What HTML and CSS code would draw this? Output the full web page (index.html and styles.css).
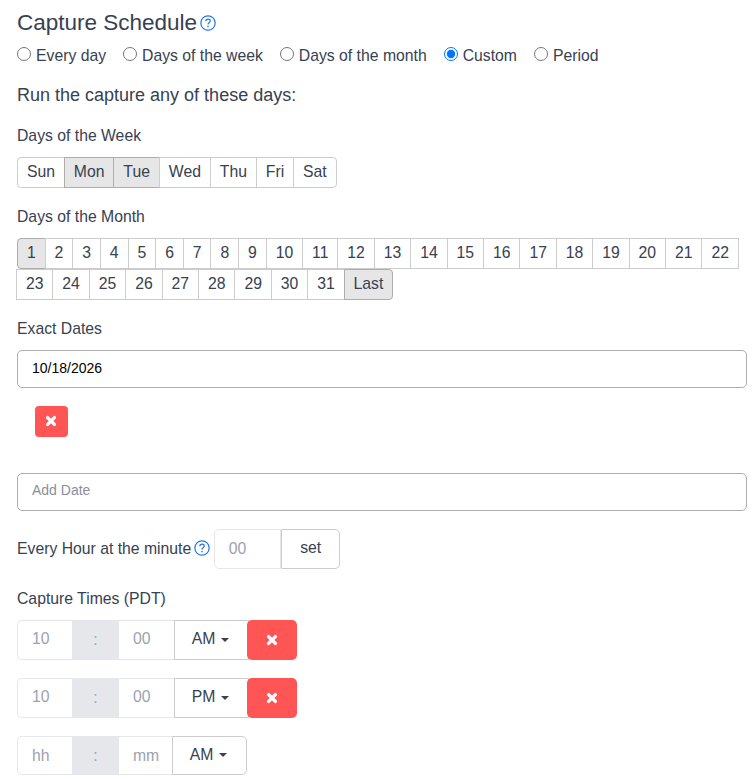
FILE: index.html

```html
<!DOCTYPE html>
<html lang="en">
<head>
    <meta charset="UTF-8">
    <title>Capture Schedule</title>
    <link rel="stylesheet" href="styles.css">
</head>
<body>

    <svg class="sprites" width="0" height="0">
        <symbol id="help" viewBox="0 0 17 17">
            <circle cx="8.5" cy="8.5" r="7.6" fill="none" stroke="currentColor" stroke-width="1.3"/>
            <path d="M6.2 6.7c0-1.4 1-2.3 2.4-2.3s2.3.9 2.3 2c0 1.8-2.4 1.8-2.4 3.7" fill="none" stroke="currentColor" stroke-width="1.3"/>
            <circle cx="8.5" cy="12.4" r=".85" fill="currentColor"/>
        </symbol>
        <symbol id="times" viewBox="0 0 12 12">
            <path d="M2.6 2.6l6.8 6.8M9.4 2.6L2.6 9.4" fill="none" stroke="currentColor" stroke-width="3.4" stroke-linecap="round"/>
        </symbol>
    </svg>

    <div class="container">
        <h2 class="title">Capture Schedule<svg class="help help-title"><use href="#help"/></svg></h2>

        <div class="radios">
            <label class="radio"><input type="radio" name="schedule">Every day</label>
            <label class="radio"><input type="radio" name="schedule">Days of the week</label>
            <label class="radio"><input type="radio" name="schedule">Days of the month</label>
            <label class="radio"><input type="radio" name="schedule" checked>Custom</label>
            <label class="radio"><input type="radio" name="schedule">Period</label>
        </div>

        <h3 class="subtitle">Run the capture any of these days:</h3>

        <div class="field-label week-label">Days of the Week</div>
        <div class="btn-group">
            <button class="day">Sun</button>
            <button class="day active">Mon</button>
            <button class="day active">Tue</button>
            <button class="day">Wed</button>
            <button class="day">Thu</button>
            <button class="day">Fri</button>
            <button class="day">Sat</button>
        </div>

        <div class="field-label month-label">Days of the Month</div>
        <div class="btn-group month-group">
            <button class="day active">1</button>
            <button class="day">2</button>
            <button class="day">3</button>
            <button class="day">4</button>
            <button class="day">5</button>
            <button class="day">6</button>
            <button class="day">7</button>
            <button class="day">8</button>
            <button class="day">9</button>
            <button class="day">10</button>
            <button class="day">11</button>
            <button class="day">12</button>
            <button class="day">13</button>
            <button class="day">14</button>
            <button class="day">15</button>
            <button class="day">16</button>
            <button class="day">17</button>
            <button class="day">18</button>
            <button class="day">19</button>
            <button class="day">20</button>
            <button class="day">21</button>
            <button class="day">22</button>
            <button class="day">23</button>
            <button class="day">24</button>
            <button class="day">25</button>
            <button class="day">26</button>
            <button class="day">27</button>
            <button class="day">28</button>
            <button class="day">29</button>
            <button class="day">30</button>
            <button class="day">31</button>
            <button class="day active">Last</button>
        </div>

        <div class="field-label dates-label">Exact Dates</div>
        <input class="date-input" type="text" value="10/18/2026">
        <button class="btn-delete btn-delete-date"><svg class="times"><use href="#times"/></svg></button>
        <input class="date-input add-date" type="text" placeholder="Add Date">

        <div class="minute-row">
            <span class="minute-label">Every Hour at the minute</span>
            <svg class="help help-minute"><use href="#help"/></svg>
            <input class="minute-input" type="text" placeholder="00">
            <button class="btn-set">set</button>
        </div>

        <div class="field-label times-label">Capture Times (PDT)</div>

        <div class="time-row">
            <input class="time-input hour" type="text" placeholder="10">
            <span class="time-sep">:</span>
            <input class="time-input minute" type="text" placeholder="00">
            <button class="btn-ampm">AM<span class="caret"></span></button>
            <button class="btn-delete btn-delete-time"><svg class="times"><use href="#times"/></svg></button>
        </div>
        <div class="time-row">
            <input class="time-input hour" type="text" placeholder="10">
            <span class="time-sep">:</span>
            <input class="time-input minute" type="text" placeholder="00">
            <button class="btn-ampm">PM<span class="caret"></span></button>
            <button class="btn-delete btn-delete-time"><svg class="times"><use href="#times"/></svg></button>
        </div>
        <div class="time-row new-time">
            <input class="time-input hour" type="text" placeholder="hh">
            <span class="time-sep">:</span>
            <input class="time-input minute" type="text" placeholder="mm">
            <button class="btn-ampm">AM<span class="caret"></span></button>
        </div>
    </div>

</body>
</html>
```

FILE: styles.css

```css
* {
    box-sizing: border-box;
}
body {
    font-family: "Liberation Sans", Arial, sans-serif;
    font-size: 15.75px;
    margin: 0;
    padding: 0;
    color: #374151;
    background: white;
}
button, input {
    font-family: inherit;
    font-size: 15.75px;
}
.sprites {
    position: absolute;
}
.container {
    width: 747px;
    padding: 8px 0 0 17px;
}
.title {
    font-size: 22.5px;
    font-weight: normal;
    line-height: 30px;
    margin: 0;
    display: flex;
    align-items: center;
}
.help {
    color: #2478e6;
    width: 16px;
    height: 16px;
    flex: none;
}
.help-title {
    margin-left: 3px;
}
.radios {
    display: flex;
    gap: 17px;
    margin-top: 8px;
}
.radio {
    display: flex;
    align-items: flex-start;
    line-height: 20px;
}
.radio input {
    width: 14px;
    height: 14px;
    margin: 1px 5px 0 0;
}
.subtitle {
    font-size: 18px;
    font-weight: normal;
    line-height: 24px;
    margin: 17px 0 0;
}
.field-label {
    line-height: 20px;
    margin-top: 19px;
}
.btn-group {
    display: flex;
    flex-wrap: wrap;
    margin-top: 11px;
}
.day {
    background: white;
    color: #374151;
    border: 1px solid #ccc;
    padding: 0 8.95px 2px;
    height: 31px;
    margin-left: -1px;
}
.day:first-child {
    margin-left: 0;
    border-radius: 4px 0 0 4px;
}
.day:last-child {
    border-radius: 0 4px 4px 0;
}
.day.active {
    background: #e6e6e6;
    border-color: #adadad;
}
.date-input {
    display: block;
    width: 730px;
    height: 38px;
    margin-top: 11px;
    padding: 0 14px 2px;
    font-size: 14px;
    color: black;
    border: 1px solid #adadad;
    border-radius: 5px;
}
.date-input::placeholder {
    color: #8b8f97;
}
.btn-delete {
    display: flex;
    align-items: center;
    justify-content: center;
    background: #ff5555;
    color: white;
    border: none;
    border-radius: 4px;
    padding: 0;
}
.btn-delete-date {
    width: 33px;
    height: 31px;
    margin: 18px 0 0 18px;
    padding: 0 1px 1px 0;
}
.times {
    width: 12px;
    height: 12px;
}
.add-date {
    margin-top: 36px;
    padding-bottom: 5px;
}
.minute-row {
    display: flex;
    align-items: center;
    margin-top: 18px;
}
.help-minute {
    margin: -3px 4px 0 3px;
}
.minute-input {
    width: 67px;
    height: 40px;
    padding: 0 13.5px 1px;
    border: 1px solid #e5e7eb;
    border-radius: 5px 0 0 5px;
}
.minute-input::placeholder, .time-input::placeholder {
    color: #9ca3af;
}
.btn-set {
    width: 59px;
    height: 40px;
    background: white;
    color: #374151;
    border: 1px solid #ccc;
    border-radius: 0 5px 5px 0;
    padding: 0 0 2px;
}
.times-label {
    margin-top: 20px;
}
.time-row {
    display: flex;
    height: 40px;
    margin-top: 18px;
    width: fit-content;
}
.times-label + .time-row {
    margin-top: 11px;
}
.time-input {
    height: 40px;
    width: 55px;
    padding: 0 0 3px 14px;
    border: 1px solid #e5e7eb;
    border-left: none;
    border-right: none;
}
.time-input.hour {
    border-left: 1px solid #e5e7eb;
    border-radius: 5px 0 0 5px;
}
.time-sep {
    width: 47px;
    background: #e5e7eb;
    color: #9ca3af;
    display: flex;
    align-items: center;
    justify-content: center;
}
.btn-ampm {
    width: 75px;
    background: white;
    color: #374151;
    border: 1px solid #ccc;
    padding: 0 2px 2px 0;
    white-space: nowrap;
}
.caret {
    display: inline-block;
    margin-left: 6px;
    vertical-align: middle;
    border-top: 4px solid #374151;
    border-left: 4px solid transparent;
    border-right: 4px solid transparent;
}
.btn-delete-time {
    width: 50px;
    height: 40px;
    margin-left: -2px;
    border-radius: 5px;
}
.new-time {
    height: 39px;
}
.new-time .time-input {
    height: 39px;
    padding-bottom: 0;
}
.new-time .time-input.minute {
    width: 53px;
}
.new-time .btn-ampm {
    border-radius: 0 5px 5px 0;
}
```
